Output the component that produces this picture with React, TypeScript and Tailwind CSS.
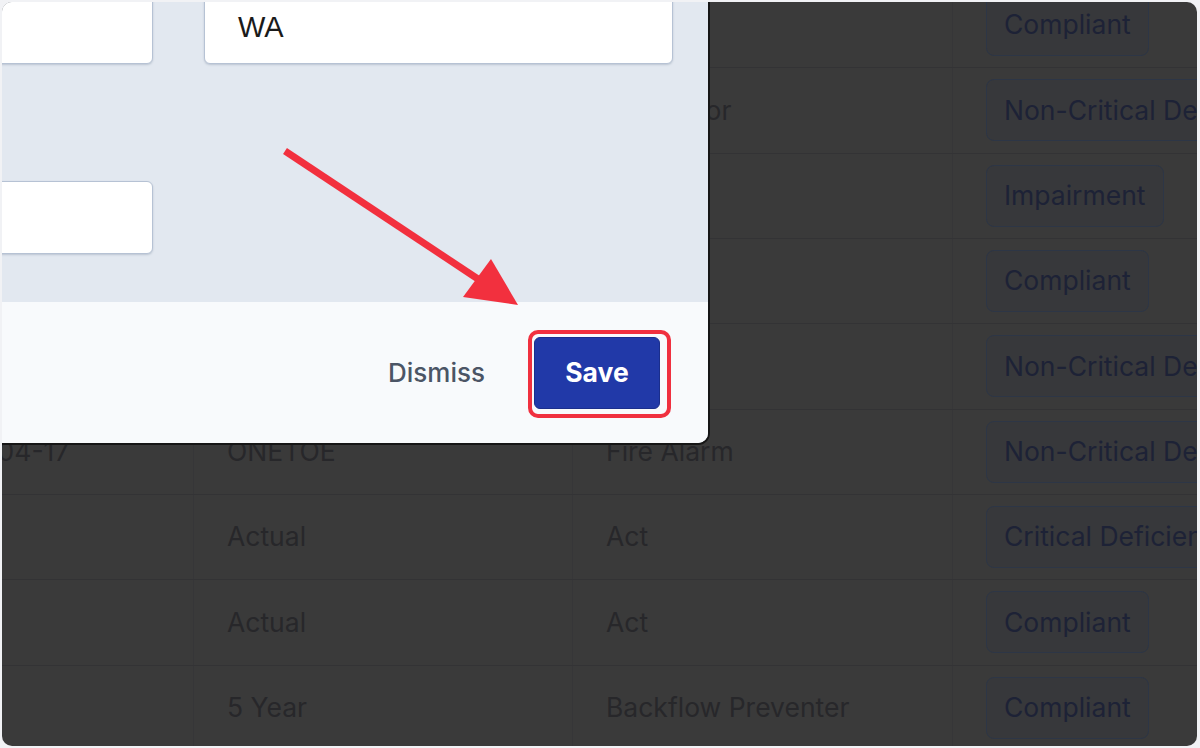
import React from "react";

type Row = { c1: string; c2: string; c3: string; badge: string };

const rows: Row[] = [
  { c1: "", c2: "Annual", c3: "Pump", badge: "Compliant" },
  { c1: "", c2: "Annual", c3: "Generator", badge: "Non-Critical Deficiency" },
  { c1: "", c2: "Quarterly", c3: "Pump", badge: "Impairment" },
  { c1: "", c2: "Annual", c3: "Hose", badge: "Compliant" },
  { c1: "", c2: "Monthly", c3: "Hood", badge: "Non-Critical Deficiency" },
  { c1: "2023-04-17", c2: "ONETOE", c3: "Fire Alarm", badge: "Non-Critical Deficiency" },
  { c1: "", c2: "Actual", c3: "Act", badge: "Critical Deficiency" },
  { c1: "", c2: "Actual", c3: "Act", badge: "Compliant" },
  { c1: "", c2: "5 Year", c3: "Backflow Preventer", badge: "Compliant" },
];

export default function App() {
  return (
    <div className="w-[1200px] h-[748px] bg-[#f1f2f5] p-[2px] pr-[3px]">
      <div
        className="relative h-full w-full overflow-hidden rounded-[10px] bg-[#3a3a3a]"
        style={{ fontFamily: "Inter, 'Noto Sans', sans-serif" }}
      >
        {/* dimmed table */}
        <div className="-ml-[103px] -mt-[19px] flex flex-col">
          {rows.map((r, i) => (
            <div
              key={i}
              className="flex h-[85.33px] shrink-0 border-b border-[#333335] text-[26.5px] text-[#27272a]"
            >
              <div className="flex w-[295px] shrink-0 items-center whitespace-nowrap border-r border-[#363638] pl-[21px]">
                {r.c1}
              </div>
              <div className="flex w-[379px] shrink-0 items-center whitespace-nowrap border-r border-[#363638] pl-[33px]">
                {r.c2}
              </div>
              <div className="flex w-[380px] shrink-0 items-center whitespace-nowrap border-r border-[#363638] pl-[33px]">
                {r.c3}
              </div>
              <div className="flex flex-1 items-center whitespace-nowrap pl-[33px]">
                <span className="flex h-[62px] items-center rounded-[8px] border-[1.5px] border-[#2d3646] bg-[#37383b] px-[17px] text-[#1d2236]">
                  {r.badge}
                </span>
              </div>
            </div>
          ))}
        </div>

        {/* modal */}
        <div className="absolute left-[-302px] top-[-100px] flex w-[1008px] flex-col overflow-hidden rounded-[10px] bg-[#e2e8f0] shadow-[0_0_0_2px_#161616]">
          <div className="flex flex-col px-[35px] pb-[48px] pt-[89px]">
            <div className="flex gap-[51px]">
              <div className="h-[73px] w-[418px] rounded-[6px] border border-[#b6c2d4] bg-white shadow-[0_1px_2px_rgba(100,116,139,0.3)]" />
              <div
                className="flex h-[73px] w-[469px] items-center rounded-[6px] border border-[#b6c2d4] bg-white pl-[33px] text-[29px] text-[#1a1a1a] shadow-[0_1px_2px_rgba(100,116,139,0.3)]"
                style={{ fontFamily: "'Liberation Sans', Arial, sans-serif" }}
              >
                WA
              </div>
            </div>
            <div className="mt-[117px] h-[73px] w-[418px] rounded-[6px] border border-[#b6c2d4] bg-white shadow-[0_1px_2px_rgba(100,116,139,0.3)]" />
          </div>
          <div className="flex h-[141px] items-center justify-end bg-[#f8fafc] pr-[48px]">
            <button className="mr-[49px] text-[26px] font-medium text-[#4b5565]">Dismiss</button>
            <div className="relative">
              <div className="pointer-events-none absolute left-[-6px] top-[-7px] h-[88px] w-[143px] rounded-[10px] border-[4px] border-[#f0303f]" />
              <button className="flex h-[72px] w-[126px] items-center justify-center rounded-[6px] border border-[#1a2e8c] bg-[#2139a8] text-[26.5px] font-bold text-white">
                Save
              </button>
            </div>
          </div>
        </div>

        {/* annotation arrow */}
        <svg
          className="pointer-events-none absolute left-0 top-0"
          width="1200"
          height="748"
          viewBox="2 2 1200 748"
        >
          <line x1="285" y1="151" x2="484" y2="283" stroke="#f2303e" strokeWidth="7" />
          <polygon points="463,297 491,259 518,305" fill="#f2303e" />
        </svg>
      </div>
    </div>
  );
}
